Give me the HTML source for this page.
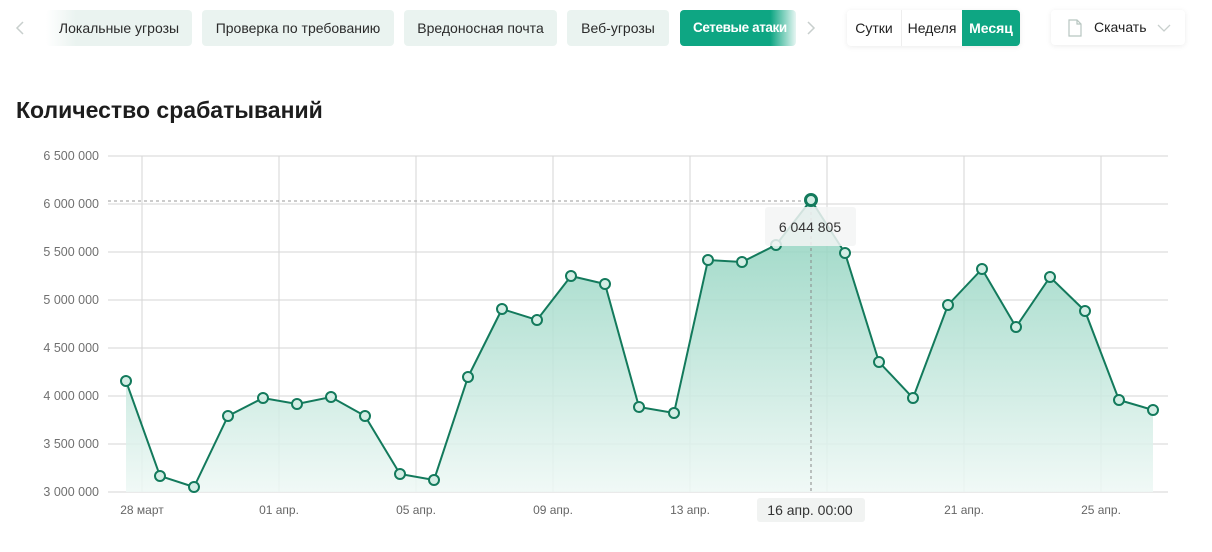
<!DOCTYPE html>
<html><head><meta charset="utf-8"><style>
*{margin:0;padding:0;box-sizing:border-box}
body{width:1212px;height:552px;background:#fff;font-family:"Liberation Sans",sans-serif;position:relative;overflow:hidden;color:#222}
.tab{position:absolute;top:10px;height:36px;border-radius:4px;background:#eaf3f0;font-size:14px;line-height:36px;text-align:center;color:#2b2b2b;white-space:nowrap;overflow:hidden}
.act{background:#0ea683;color:#fff;font-weight:bold}
.grp{position:absolute;top:10px;left:847px;width:173px;height:36px;border-radius:4px;box-shadow:0 1px 6px rgba(0,0,0,.08);font-size:14px;line-height:36px}
.grp span{position:absolute;top:0;height:36px;text-align:center}
.dl{position:absolute;top:10px;left:1051px;width:134px;height:35px;border-radius:4px;box-shadow:0 1px 6px rgba(0,0,0,.08);font-size:14px;line-height:35px}
h1{position:absolute;left:16px;top:97px;font-size:23px;font-weight:bold;color:#1d1d1d}
</style></head><body>
<svg style="position:absolute;left:14px;top:20px" width="12" height="16"><path d="M9 2 L3 8 L9 14" fill="none" stroke="#c8cfcd" stroke-width="1.5"/></svg>
<div class="tab" style="left:46px;width:146px;background:linear-gradient(90deg,#fff,#eaf3f0 30px)">Локальные угрозы</div>
<div class="tab" style="left:202px;width:192px">Проверка по требованию</div>
<div class="tab" style="left:404px;width:153px">Вредоносная почта</div>
<div class="tab" style="left:567px;width:102px">Веб-угрозы</div>
<div class="tab act" style="left:680px;width:116px;background:linear-gradient(90deg,#0ea683 78%,rgba(14,166,131,0.1));text-align:left;padding-left:13px;letter-spacing:-0.4px;font-size:13.5px">Сетевые атаки</div>
<svg style="position:absolute;left:805px;top:20px" width="12" height="16"><path d="M3 2 L9 8 L3 14" fill="none" stroke="#c8cfcd" stroke-width="1.5"/></svg>
<div class="grp"><span style="left:0;width:54px">Сутки</span><span style="left:54px;width:61px;border-left:1px solid #eee">Неделя</span><span style="left:115px;width:58px;background:#0ea683;color:#fff;font-weight:bold;border-radius:0 4px 4px 0">Месяц</span></div>
<div class="dl"><svg style="position:absolute;left:17px;top:9px" width="14" height="18"><path d="M1 1 H9 L13 5 V17 H1 Z M9 1 V5 H13" fill="none" stroke="#b8c6c1" stroke-width="1.2"/></svg><span style="position:absolute;left:43px">Скачать</span><svg style="position:absolute;left:106px;top:13px" width="14" height="10"><path d="M1 2 L7 8 L13 2" fill="none" stroke="#c8cfcd" stroke-width="1.3"/></svg></div>
<h1>Количество срабатываний</h1>
<svg style="position:absolute;left:0;top:0" width="1212" height="552" font-family="Liberation Sans, sans-serif">
<defs><linearGradient id="g" gradientUnits="userSpaceOnUse" x1="0" y1="200" x2="0" y2="492"><stop offset="0" stop-color="#86cfb9"/><stop offset="1" stop-color="#eef8f5"/></linearGradient></defs>
<g stroke="#d6d6d6" stroke-width="1">
<line x1="108" y1="156" x2="1168" y2="156"/><line x1="108" y1="204" x2="1168" y2="204"/><line x1="108" y1="252" x2="1168" y2="252"/><line x1="108" y1="300" x2="1168" y2="300"/><line x1="108" y1="348" x2="1168" y2="348"/><line x1="108" y1="396" x2="1168" y2="396"/><line x1="108" y1="444" x2="1168" y2="444"/><line x1="108" y1="492" x2="1168" y2="492"/>
<line x1="142" y1="156" x2="142" y2="492"/><line x1="279" y1="156" x2="279" y2="492"/><line x1="416" y1="156" x2="416" y2="492"/><line x1="553" y1="156" x2="553" y2="492"/><line x1="690" y1="156" x2="690" y2="492"/><line x1="827" y1="156" x2="827" y2="492"/><line x1="964" y1="156" x2="964" y2="492"/><line x1="1101" y1="156" x2="1101" y2="492"/>
</g>
<g font-size="12.5" fill="#707070" text-anchor="end">
<text x="99" y="160">6 500 000</text><text x="99" y="208">6 000 000</text><text x="99" y="256">5 500 000</text><text x="99" y="304">5 000 000</text><text x="99" y="352">4 500 000</text><text x="99" y="400">4 000 000</text><text x="99" y="448">3 500 000</text><text x="99" y="496">3 000 000</text>
</g>
<g font-size="12" fill="#666" text-anchor="middle">
<text x="142" y="514">28 март</text><text x="279" y="514">01 апр.</text><text x="416" y="514">05 апр.</text><text x="553" y="514">09 апр.</text><text x="690" y="514">13 апр.</text><text x="964" y="514">21 апр.</text><text x="1101" y="514">25 апр.</text>
</g>
<path fill="url(#g)" fill-opacity="0.85" d="M126 381 L160 476 L194 487 L228 416 L263 398 L297 404 L331 397 L365 416 L400 474 L434 480 L468 377 L502 309 L537 320 L571 276 L605 284 L639 407 L674 413 L708 260 L742 262 L776 245 L811 200 L845 253 L879 362 L913 398 L948 305 L982 269 L1016 327 L1050 277 L1085 311 L1119 400 L1153 410 L1153 492 L126 492 Z"/>
<line x1="108" y1="201" x2="811" y2="201" stroke="#999" stroke-dasharray="3,3"/>
<line x1="811" y1="200" x2="811" y2="492" stroke="#888" stroke-dasharray="3,3"/>
<path fill="none" stroke="#137a5c" stroke-width="2" d="M126 381 L160 476 L194 487 L228 416 L263 398 L297 404 L331 397 L365 416 L400 474 L434 480 L468 377 L502 309 L537 320 L571 276 L605 284 L639 407 L674 413 L708 260 L742 262 L776 245 L811 200 L845 253 L879 362 L913 398 L948 305 L982 269 L1016 327 L1050 277 L1085 311 L1119 400 L1153 410"/>
<g fill="#d3eee5" stroke="#137a5c" stroke-width="2">
<circle cx="126" cy="381" r="5"/><circle cx="160" cy="476" r="5"/><circle cx="194" cy="487" r="5"/><circle cx="228" cy="416" r="5"/><circle cx="263" cy="398" r="5"/><circle cx="297" cy="404" r="5"/><circle cx="331" cy="397" r="5"/><circle cx="365" cy="416" r="5"/><circle cx="400" cy="474" r="5"/><circle cx="434" cy="480" r="5"/><circle cx="468" cy="377" r="5"/><circle cx="502" cy="309" r="5"/><circle cx="537" cy="320" r="5"/><circle cx="571" cy="276" r="5"/><circle cx="605" cy="284" r="5"/><circle cx="639" cy="407" r="5"/><circle cx="674" cy="413" r="5"/><circle cx="708" cy="260" r="5"/><circle cx="742" cy="262" r="5"/><circle cx="776" cy="245" r="5"/><circle cx="845" cy="253" r="5"/><circle cx="879" cy="362" r="5"/><circle cx="913" cy="398" r="5"/><circle cx="948" cy="305" r="5"/><circle cx="982" cy="269" r="5"/><circle cx="1016" cy="327" r="5"/><circle cx="1050" cy="277" r="5"/><circle cx="1085" cy="311" r="5"/><circle cx="1119" cy="400" r="5"/><circle cx="1153" cy="410" r="5"/>
<circle cx="811" cy="200" r="5.5" stroke-width="3"/>
</g>
<rect x="765" y="207" width="91" height="39" rx="3" fill="#f3f5f4" fill-opacity="0.85"/>
<text x="810" y="232" font-size="14" fill="#333" text-anchor="middle">6 044 805</text>
<rect x="757" y="498" width="108" height="24" rx="3" fill="#f1f3f2"/>
<text x="810" y="515" font-size="14" fill="#333" text-anchor="middle">16 апр. 00:00</text>
</svg>
</body></html>
